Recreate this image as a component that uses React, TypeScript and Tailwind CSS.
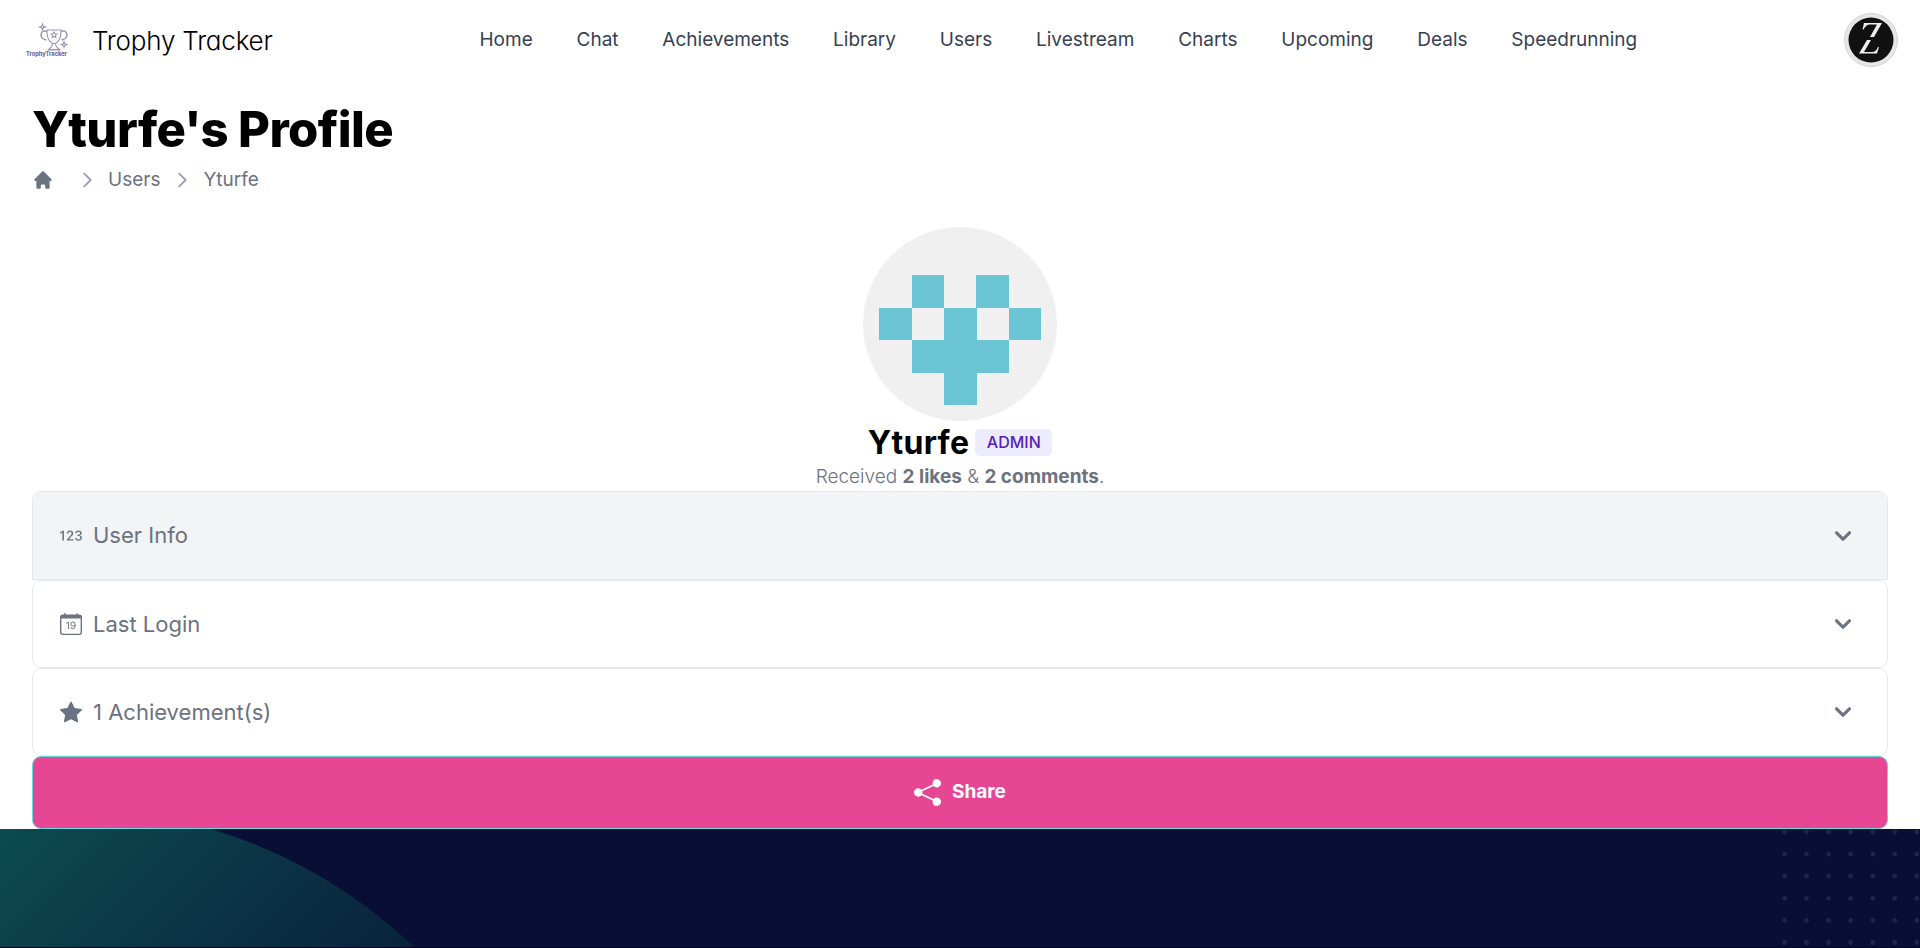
import { HiHome, HiOutlineChevronRight, HiChevronDown } from "react-icons/hi";
import { Bs123, BsCalendarDate, BsStarFill, BsShareFill } from "react-icons/bs";
import type { IconType } from "react-icons";

const links = ["Home", "Chat", "Achievements", "Library", "Users", "Livestream", "Charts", "Upcoming", "Deals", "Speedrunning"];

function Logo() {
  return (
    <svg viewBox="0 0 44 36" className="h-[36px] w-[44px] overflow-visible" fill="none" stroke="#9a97b6" strokeWidth="1.1">
      <path d="M23 8h14v1c0 7-2.500 11-5.500 12.500h-3C25.500 20 23 16 23 9z" />
      <path d="M23 9.500c-6-2-6.500 3-5.500 5.500s3 2.500 5 3M37 9.500c6-2 6.500 3 5.500 5.500s-3 2.500-5 3" strokeWidth="1.500" />
      <path d="M28.500 21.500c0 3-1 4-4 6h11c-3-2-4-3-4-6M24 28h12" />
      <path d="M30 10l.9 1.800 2 .2-1.500 1.400.4 2-1.800-1-1.800 1 .4-2-1.500-1.400 2-.2z" />
      <path d="M18.500 2l.8 2.200 2.200.8-2.200.8-.8 2.200-.8-2.200-2.200-.8 2.200-.8zM40 19.500l.8 2.200 2.200.8-2.200.8-.8 2.200-.8-2.200-2.200-.8 2.200-.8z" />
      <text x="2" y="33.500" textLength="41" lengthAdjust="spacingAndGlyphs" fontFamily="Inter, sans-serif" fontWeight="800" fontSize="5.500" fill="#6e6a99" stroke="none">TrophyTracker</text>
    </svg>
  );
}

function UserAvatar() {
  return (
    <svg viewBox="0 0 54 54" className="size-[54px]">
      <circle cx="27" cy="27" r="26.500" fill="#e6e6e6" stroke="#d4d4d4" />
      <circle cx="27" cy="27" r="22.500" fill="#111" />
      <path d="M20 10h18l-8 14h-4l7-12.500h-7c-3 0-4.500 1.500-6.500 5h-1zM23 27h4l-7 12h8c3 0 4.500-1.500 6-5h1l-2 6.500H15z" fill="#eee" />
    </svg>
  );
}

function Identicon() {
  const cells = [[1, 0], [3, 0], [0, 1], [2, 1], [4, 1], [1, 2], [2, 2], [3, 2], [2, 3]];
  return (
    <svg viewBox="0 0 194 194" shapeRendering="crispEdges" className="size-[194px] rounded-full bg-[#f0f0f0]">
      {cells.map(([c, r]) => (
        <rect key={`${c}-${r}`} x={16.1 + c * 32.4} y={48.4 + r * 32.4} width="32.600" height="32.600" fill="#6cc5d5" />
      ))}
    </svg>
  );
}

function Panel({ icon: Icon, label, open }: { icon: IconType; label: string; open?: boolean }) {
  return (
    <div className={`shrink-0 overflow-hidden border border-gray-200 ${open ? "h-[89px] rounded-t-[9px]" : "h-[88px] rounded-[9px]"}`}>
      <button className={`flex size-full items-center justify-between pl-[27px] pr-[28px] text-[#6b7280] ${open ? "bg-gray-100" : "bg-white"}`}>
        <span className="flex items-center gap-[11px] text-[22px]">
          <Icon className="size-[22px]" />
          {label}
        </span>
        <HiChevronDown className="size-[32px]" />
      </button>
    </div>
  );
}

function Footer() {
  const dots = Array.from({ length: 42 }, (_, i) => [1784.500 + (i % 7) * 22.050, 3 + Math.floor(i / 7) * 22.100]);
  return (
    <footer className="h-[119px] border-b border-[#04061f] bg-[#090e34]">
      <svg viewBox="0 0 1920 118" className="block h-[118px] w-full">
        <defs>
          <linearGradient id="glow" gradientUnits="userSpaceOnUse" x1="0" y1="0" x2="320" y2="320">
            <stop stopColor="#0c4a50" />
            <stop offset="1" stopColor="#091a38" />
          </linearGradient>
        </defs>
        <circle cx="69" cy="479" r="499.500" fill="url(#glow)" />
        {dots.map(([x, y]) => (
          <circle key={`${x}-${y}`} cx={x} cy={y} r="2.400" fill="#1f2548" />
        ))}
      </svg>
    </footer>
  );
}

export default function App() {
  return (
    <div className="flex h-[948px] flex-col overflow-hidden bg-white font-[Inter,sans-serif]">
      <header className="flex h-[80px] shrink-0 items-center justify-between pl-[24px] pr-[22px]">
        <div className="flex w-[455.5px] items-center gap-[24px]">
          <Logo />
          <span className="text-[26px] font-light tracking-[-0.2px] text-black [font-feature-settings:'cv11']">Trophy Tracker</span>
        </div>
        <nav className="flex flex-1 gap-[43.8px] text-[19px] text-gray-700">
          {links.map((l) => <a key={l}>{l}</a>)}
        </nav>
        <UserAvatar />
      </header>
      <main className="flex h-[749px] shrink-0 flex-col px-[32px]">
        <h1 className="mt-[23px] text-[49px] leading-[54px] font-extrabold tracking-[-0.6px] text-black">Yturfe's Profile</h1>
        <nav className="mt-[9px] flex h-[28px] items-center text-[19px] text-[#6b7280]">
          <HiHome className="size-[22px]" />
          <HiOutlineChevronRight className="ml-[22px] size-[22px] text-gray-400" />
          <span className="ml-[10px]">Users</span>
          <HiOutlineChevronRight className="mx-[10.5px] size-[22px] text-gray-400" />
          <span>Yturfe</span>
        </nav>
        <section className="mt-[33px] flex flex-col items-center">
          <Identicon />
          <div className="flex h-[44px] items-center gap-[6px]">
            <h2 className="text-[32px] font-bold tracking-[0.3px] text-black">Yturfe</h2>
            <span className="mb-[2px] rounded-[5px] bg-[#edebfe] px-[11.5px] text-[16px] leading-[27px] font-medium text-[#5521b5]">ADMIN</span>
          </div>
          <p className="h-[26px] text-[19px] leading-[24px] font-light text-[#6b7280]">
            Received <b className="font-bold">2 likes</b> &amp; <b className="font-bold">2 comments</b>.
          </p>
        </section>
        <Panel icon={Bs123} label="User Info" open />
        <Panel icon={BsCalendarDate} label="Last Login" />
        <Panel icon={BsStarFill} label="1 Achievement(s)" />
        <button className="flex h-[73px] shrink-0 items-center justify-center gap-[11px] rounded-[9px] border border-[#6bdadb] bg-[#e74694] text-[19px] font-bold text-white">
          <BsShareFill className="size-[27px]" />
          Share
        </button>
      </main>
      <Footer />
    </div>
  );
}
